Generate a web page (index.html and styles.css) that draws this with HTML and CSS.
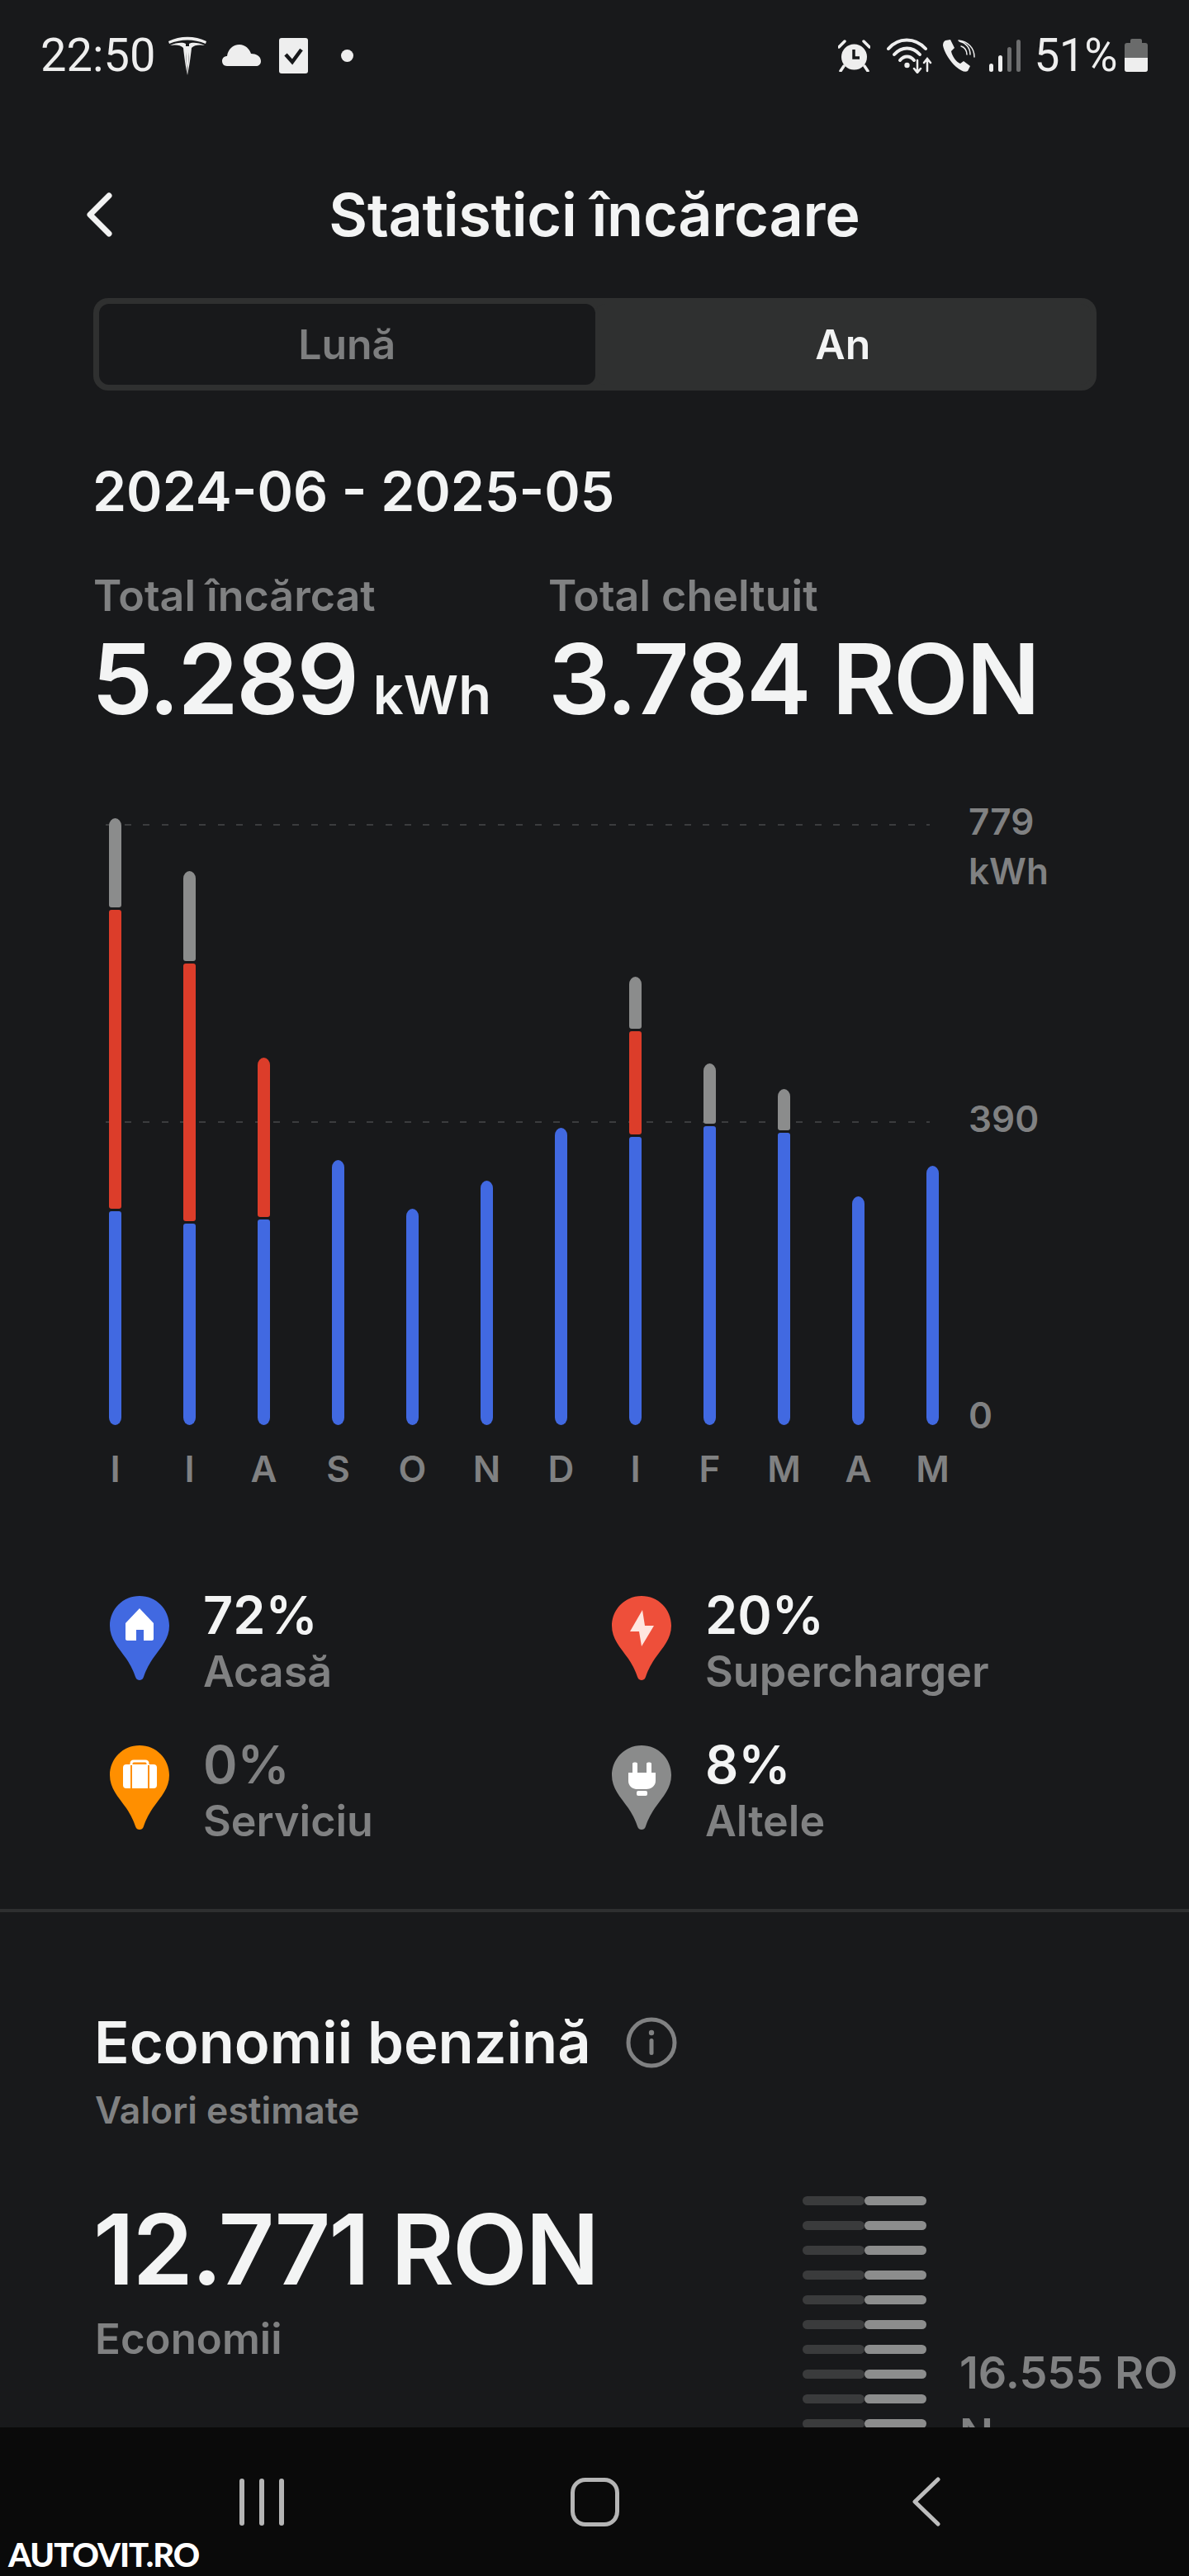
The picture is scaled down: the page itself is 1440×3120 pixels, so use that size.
FILE: index.html
```html
<!DOCTYPE html>
<html lang="ro">
<head>
    <meta charset="UTF-8">
    <title>Statistici încărcare</title>
    <link rel="stylesheet" href="styles.css">
</head>
<body>
<div class="screen">
    <div class="statusbar">
        <div class="status-group">
            <span class="clock">22:50</span>
            <svg class="ic-tesla" viewBox="0 0 46 47"><path d="M0 6C14 -1 32 -1 46 6L45 9C31 3 15 3 1 9Z"/><path d="M2 11C10 7 18 7 21 9V13C21 22 22 36 23 47C24 36 25 22 25 13V9C28 7 36 7 44 11C39 10 31 10 28 14C27 24 25 38 23 47C21 38 19 24 18 14C15 10 7 10 2 11Z"/><path d="M20.5 12H25.5L23 47Z"/></svg>
            <svg class="ic-cloud" viewBox="0 0 47 26"><path d="M6 26C2 26 0 23 0 20C0 16 3 14 6 14C7 6 13 0 21 0C28 0 33 5 35 11C41 11 47 14 47 20C47 24 44 26 41 26Z"/></svg>
            <svg class="ic-check" viewBox="0 0 35 43"><rect width="35" height="43" rx="3"/><path d="M8 20L16 29L27 14" fill="none" stroke="#17181a" stroke-width="4.5"/></svg>
            <span class="status-dot"></span>
        </div>
        <div class="status-group">
            <svg class="ic-alarm" viewBox="0 0 39 39"><circle cx="19.5" cy="21" r="15.5"/><path d="M1 9L8 2M38 9L31 2" stroke="#eee" stroke-width="3.5" stroke-linecap="round"/><path d="M7 32L3 38M32 32L36 38" stroke="#eee" stroke-width="3.5" stroke-linecap="round"/><path d="M19 12V22H26" fill="none" stroke="#17181a" stroke-width="3.5"/></svg>
            <svg class="ic-wifi" viewBox="0 0 55 44"><g fill="none" stroke="#eee" stroke-linecap="round"><path d="M2 14C14 0 34 0 47 14" stroke-width="4"/><path d="M9 21C18 11 31 11 40 21" stroke-width="4"/><path d="M16 28C21 22 28 22 33 28" stroke-width="4"/><path d="M37 28V42M33 38L37 43L41 38M49 28V41M45 31L49 26L53 31" stroke-width="2.5"/></g><circle cx="24.5" cy="34" r="3.2"/></svg>
            <svg class="ic-phone" viewBox="0 0 39 39"><path d="M3 1L9 0L14 10L10 14C11 20 16 27 21 29L25 26L33 32L30 38C27 40 22 38 16 33C8 26 1 14 0 7C0 4 1 2 3 1Z"/><path d="M20 2C28 4 33 10 33 18M22 8C26 9 29 13 29 18M19 1C30 2 38 10 38 21" fill="none" stroke="#eee" stroke-width="1.5" stroke-linecap="round"/></svg>
            <div class="signal"><i class="sig1"></i><i class="sig2"></i><i class="sig3"></i><i class="sig4"></i></div>
            <span class="batt-pct">51%</span>
            <div class="battery"><div class="batt-cap"></div><div class="batt-body"><div class="batt-fill"></div></div></div>
        </div>
    </div>

    <main class="content">
        <div class="topbar">
            <svg class="back" viewBox="0 0 32 54"><path d="M27 4L4 27L27 50" fill="none" stroke="#f2f2f2" stroke-width="7" stroke-linecap="round" stroke-linejoin="round"/></svg>
            <h1>Statistici încărcare</h1>
        </div>

        <div class="segment">
            <div class="seg-btn">Lună</div>
            <div class="seg-btn active">An</div>
        </div>

        <div class="date-range">2024-06 - 2025-05</div>

        <div class="totals">
            <div class="total total-kwh">
                <div class="total-label">Total încărcat</div>
                <div class="total-value">5.289 <small>kWh</small></div>
            </div>
            <div class="total">
                <div class="total-label">Total cheltuit</div>
                <div class="total-value">3.784 RON</div>
            </div>
        </div>

        <div class="chart">
            <div class="plot-wrap">
                <div class="plot">
                    <div class="gridline grid-top"></div>
                    <div class="gridline grid-mid"></div>
                    <div class="bar"><div class="gray" style="height:108px"></div><div class="red" style="height:362px"></div><div class="blue" style="height:259.5px"></div></div>
                    <div class="bar"><div class="gray" style="height:109px"></div><div class="red" style="height:312px"></div><div class="blue" style="height:244.5px"></div></div>
                    <div class="bar"><div class="red" style="height:193px"></div><div class="blue" style="height:249.5px"></div></div>
                    <div class="bar"><div class="blue" style="height:321.5px"></div></div>
                    <div class="bar"><div class="blue" style="height:262.5px"></div></div>
                    <div class="bar"><div class="blue" style="height:296.5px"></div></div>
                    <div class="bar"><div class="blue" style="height:360px"></div></div>
                    <div class="bar"><div class="gray" style="height:63px"></div><div class="red" style="height:125px"></div><div class="blue" style="height:349px"></div></div>
                    <div class="bar"><div class="gray" style="height:73px"></div><div class="blue" style="height:362.5px"></div></div>
                    <div class="bar"><div class="gray" style="height:50px"></div><div class="blue" style="height:354.5px"></div></div>
                    <div class="bar"><div class="blue" style="height:277.5px"></div></div>
                    <div class="bar"><div class="blue" style="height:314.5px"></div></div>
                </div>
                <div class="months">
                    <span>I</span><span>I</span><span>A</span><span>S</span><span>O</span><span>N</span><span>D</span><span>I</span><span>F</span><span>M</span><span>A</span><span>M</span>
                </div>
            </div>
            <div class="axis">
                <div class="axis-top">779<br>kWh</div>
                <div class="axis-mid">390</div>
                <div class="axis-low">0</div>
            </div>
        </div>

        <div class="legend">
            <div class="legend-item">
                <svg class="pin" viewBox="0 0 72 102"><path fill="#4169e1" d="M36 0C56 0 72 16 72 36C72 52 62 62 52 76C46 85 43 92 41 98C40 101 38 102 36 102C34 102 32 101 31 98C29 92 26 85 20 76C10 62 0 52 0 36C0 16 16 0 36 0Z"/><path fill="#fff" d="M36 15L53 33V52C53 53 52 54 51 54H41V41H32V54H21C20 54 19 53 19 52V33Z"/></svg>
                <div class="legend-text"><div class="pct">72%</div><div class="legend-name">Acasă</div></div>
            </div>
            <div class="legend-item">
                <svg class="pin" viewBox="0 0 72 102"><path fill="#ee4f3a" d="M36 0C56 0 72 16 72 36C72 52 62 62 52 76C46 85 43 92 41 98C40 101 38 102 36 102C34 102 32 101 31 98C29 92 26 85 20 76C10 62 0 52 0 36C0 16 16 0 36 0Z"/><path fill="#ffe6df" d="M37 17L22 43H33L36 61L51 36H40Z"/></svg>
                <div class="legend-text"><div class="pct">20%</div><div class="legend-name">Supercharger</div></div>
            </div>
            <div class="legend-item">
                <svg class="pin" viewBox="0 0 72 102"><path fill="#ff8f00" d="M36 0C56 0 72 16 72 36C72 52 62 62 52 76C46 85 43 92 41 98C40 101 38 102 36 102C34 102 32 101 31 98C29 92 26 85 20 76C10 62 0 52 0 36C0 16 16 0 36 0Z"/><path fill="none" stroke="#fff" stroke-width="3" d="M26 25V22C26 20 27 19 29 19H43C45 19 46 20 46 22V25"/><rect fill="#fff" x="16" y="23" width="41" height="29" rx="4"/><path stroke="#ff8f00" stroke-width="2" d="M26 24V52M47 24V52"/></svg>
                <div class="legend-text"><div class="pct dim">0%</div><div class="legend-name">Serviciu</div></div>
            </div>
            <div class="legend-item">
                <svg class="pin" viewBox="0 0 72 102"><path fill="#8a8b8b" d="M36 0C56 0 72 16 72 36C72 52 62 62 52 76C46 85 43 92 41 98C40 101 38 102 36 102C34 102 32 101 31 98C29 92 26 85 20 76C10 62 0 52 0 36C0 16 16 0 36 0Z"/><path fill="#fff" d="M25 22C25 20 31 20 31 22V33H42V22C42 20 48 20 48 22V33H53V43C53 50 46 53 42 53H31C26 53 20 50 20 43V33H25Z"/><rect fill="#fff" x="30" y="55" width="13" height="6" rx="2"/></svg>
                <div class="legend-text"><div class="pct">8%</div><div class="legend-name">Altele</div></div>
            </div>
        </div>

        <div class="divider"></div>

        <section class="savings">
            <div class="savings-head">
                <h2>Economii benzină</h2>
                <svg class="info" viewBox="0 0 62 62"><circle cx="31" cy="31" r="28" fill="none" stroke="#808182" stroke-width="5"/><circle cx="31" cy="19" r="3.2" fill="#808182"/><rect x="28.5" y="26" width="5" height="20" rx="2.5" fill="#808182"/></svg>
            </div>
            <div class="savings-sub">Valori estimate</div>
            <div class="savings-row">
                <div class="savings-main">
                    <div class="savings-value">12.771 RON</div>
                    <div class="savings-label">Economii</div>
                </div>
                <div class="ticks">
                    <div class="tick"><i></i><b></b></div>
                    <div class="tick"><i></i><b></b></div>
                    <div class="tick"><i></i><b></b></div>
                    <div class="tick"><i></i><b></b></div>
                    <div class="tick"><i></i><b></b></div>
                    <div class="tick"><i></i><b></b></div>
                    <div class="tick"><i></i><b></b></div>
                    <div class="tick"><i></i><b></b></div>
                    <div class="tick"><i></i><b></b></div>
                    <div class="tick"><i></i><b></b></div>
                </div>
                <div class="savings-side">16.555 RON</div>
            </div>
        </section>
    </main>

    <nav class="navbar">
        <div class="nav-recent"><i></i><i></i><i></i></div>
        <div class="nav-home"></div>
        <svg class="nav-back" viewBox="0 0 34 60"><path d="M31 3L3 30L31 57" fill="none" stroke="#bdbdbd" stroke-width="5" stroke-linecap="round" stroke-linejoin="round"/></svg>
        <div class="watermark">AUTOVIT.RO</div>
    </nav>
</div>
</body>
</html>
```

FILE: styles.css
```css
body {
    margin: 0;
    background-color: #18191b;
    color: #f3f4f4;
    font-family: 'Inter', 'Noto Sans', sans-serif;
}
h1, h2 {
    margin: 0;
    font-weight: 500;
}
.screen {
    width: 1440px;
    height: 3120px;
    display: flex;
    flex-direction: column;
    overflow: hidden;
    position: relative;
}

/* status bar */
.statusbar {
    flex: 0 0 134px;
    display: flex;
    justify-content: space-between;
    align-items: center;
    padding: 0 50px 0 49px;
    color: #eee;
}
.status-group {
    display: flex;
    align-items: center;
}
.status-group svg {
    fill: #eee;
    display: block;
}
.clock {
    font-family: 'Roboto', sans-serif;
    font-weight: 400;
    font-size: 56px;
    line-height: 60px;
}
.ic-tesla { width: 46px; height: 47px; margin-left: 16px; }
.ic-cloud { width: 47px; height: 26px; margin-left: 19px; }
.ic-check { width: 35px; height: 43px; margin-left: 22px; }
.status-dot {
    width: 15px;
    height: 15px;
    border-radius: 50%;
    background-color: #eee;
    margin-left: 40px;
}
.ic-alarm { width: 39px; height: 39px; }
.ic-wifi { width: 55px; height: 44px; margin-left: 20px; }
.ic-phone { width: 39px; height: 39px; margin-left: 13px; }
.signal {
    display: flex;
    align-items: flex-end;
    gap: 6px;
    height: 39px;
    margin-left: 17px;
}
.signal i {
    width: 5px;
    border-radius: 2.5px;
    background-color: #eee;
}
.sig1 { height: 10px; }
.sig2 { height: 20px; }
.sig3 { height: 30px; background-color: #6d6e6f !important; }
.sig4 { height: 39px; background-color: #6d6e6f !important; }
.batt-pct {
    font-family: 'Roboto', sans-serif;
    font-weight: 400;
    font-size: 55px;
    line-height: 60px;
    margin-left: 16px;
    letter-spacing: -0.5px;
}
.battery {
    width: 28px;
    margin-left: 9px;
}
.batt-cap {
    width: 14px;
    height: 5px;
    margin: 0 auto;
    background-color: #6a6b6b;
    border-radius: 2px 2px 0 0;
}
.batt-body {
    height: 35px;
    background-color: #6a6b6b;
    border-radius: 3px;
    display: flex;
    flex-direction: column;
    justify-content: flex-end;
    overflow: hidden;
}
.batt-fill {
    height: 17px;
    background-color: #eee;
}

.content {
    flex: 1;
    min-height: 0;
    overflow: hidden;
}

/* header */
.topbar {
    position: relative;
    height: 100px;
    margin-top: 76px;
    text-align: center;
}
.back {
    position: absolute;
    left: 105px;
    top: 23px;
    width: 32px;
    height: 54px;
}
.topbar h1 {
    font-size: 72px;
    line-height: 100px;
    font-weight: 600;
    letter-spacing: -0.25px;
}

/* month / year switch */
.segment {
    display: flex;
    width: 1201px;
    height: 98px;
    margin: 51px 0 0 113px;
    padding: 7px;
    background-color: #2f3030;
    border-radius: 18px;
}
.seg-btn {
    flex: 1;
    text-align: center;
    font-size: 50px;
    line-height: 98px;
    font-weight: 600;
    color: #7d7e7f;
    background-color: #18191b;
    border-radius: 12px;
}
.seg-btn.active {
    color: #f3f4f4;
    background-color: #2f3030;
}

.date-range {
    margin: 82px 0 0 112px;
    font-size: 66px;
    line-height: 80px;
    font-weight: 600;
}

/* totals */
.totals {
    display: flex;
    margin: 57px 0 0 113px;
}
.total-kwh {
    width: 551px;
}
.total-label {
    font-size: 52px;
    line-height: 60px;
    font-weight: 600;
    color: #808182;
}
.total-value {
    margin-top: 10px;
    font-size: 118px;
    line-height: 120px;
    font-weight: 600;
    letter-spacing: -2.4px;
    white-space: nowrap;
}
.total-kwh .total-value {
    margin-left: -2px;
}
.total-value small {
    font-size: 65px;
    line-height: 1;
    letter-spacing: 0;
    margin-left: -8px;
}

/* chart */
.chart {
    display: flex;
    margin-top: 82.5px;
}
.plot-wrap {
    padding-left: 94.5px;
}
.plot {
    position: relative;
    display: flex;
    align-items: flex-end;
    width: 1080px;
    height: 761.5px;
}
.gridline {
    position: absolute;
    left: 33.5px;
    width: 998px;
    height: 2px;
    background: repeating-linear-gradient(90deg, #3b3c3e 0 8px, transparent 8px 22.6px);
}
.grid-top { top: 33px; }
.grid-mid { top: 393px; }
.bar {
    position: relative;
    flex: 0 0 90px;
    display: flex;
    flex-direction: column;
    align-items: center;
    gap: 3px;
}
.bar div {
    width: 15px;
    border-radius: 3px;
}
.bar div:first-child {
    border-top-left-radius: 7.5px 9px;
    border-top-right-radius: 7.5px 9px;
}
.bar div:last-child {
    border-bottom-left-radius: 7.5px 9px;
    border-bottom-right-radius: 7.5px 9px;
}
.gray { background-color: #8b8c8c; }
.red { background-color: #dc3d2a; }
.blue { background-color: #4169e1; }
.months {
    display: flex;
    margin-top: 29.5px;
    font-size: 44px;
    line-height: 46px;
    font-weight: 600;
    color: #808182;
}
.months span {
    flex: 0 0 90px;
    text-align: center;
}
.axis {
    margin-left: -1.5px;
    font-size: 44px;
    line-height: 60px;
    font-weight: 600;
    color: #808182;
}
.axis-mid { margin-top: 240px; }
.axis-low { margin-top: 299px; }

/* legend */
.legend {
    display: grid;
    grid-template-columns: 608px 1fr;
    row-gap: 50px;
    margin: 122px 0 0 133px;
}
.legend-item {
    display: flex;
    gap: 41px;
}
.pin {
    display: block;
    width: 72px;
    height: 102px;
    margin-top: 9px;
}
.pct {
    font-size: 63px;
    line-height: 64px;
    font-weight: 600;
}
.pct.dim { color: #808182; }
.legend-name {
    margin-top: 7px;
    font-size: 52px;
    line-height: 60px;
    font-weight: 600;
    color: #808182;
}

.divider {
    height: 4px;
    margin-top: 76px;
    background-color: #2e2f30;
}

/* petrol savings */
.savings {
    padding-left: 115px;
    margin-top: 118px;
}
.savings-head {
    display: flex;
    align-items: center;
    gap: 42px;
}
.savings-head h2 {
    font-size: 70.5px;
    line-height: 80px;
    font-weight: 600;
    margin-left: -1px;
}
.info {
    width: 62px;
    height: 62px;
}
.savings-sub {
    margin-top: 17.5px;
    font-size: 44.5px;
    line-height: 50px;
    font-weight: 600;
    color: #808182;
}
.savings-row {
    display: flex;
    margin-top: 79px;
}
.savings-main {
    flex: 0 0 857px;
    padding-top: 3.5px;
}
.savings-value {
    font-size: 118px;
    line-height: 120px;
    font-weight: 600;
    letter-spacing: -2.3px;
    margin-left: -2px;
}
.savings-label {
    margin-top: 19px;
    font-size: 51px;
    line-height: 60px;
    font-weight: 600;
    color: #808182;
}
.ticks {
    display: flex;
    flex-direction: column;
    flex: 0 0 150px;
    gap: 19px;
}
.tick {
    display: flex;
    height: 11px;
}
.tick i, .tick b {
    flex: 1;
    border-radius: 6px;
}
.tick i { background-color: #3a3b3c; }
.tick b { background-color: #8c8d8d; }
.savings-side {
    flex: 0 0 278px;
    margin-left: 40px;
    padding-top: 175.5px;
    font-size: 54px;
    line-height: 75px;
    font-weight: 600;
    color: #808182;
    word-break: break-all;
}

/* android nav */
.navbar {
    position: relative;
    flex: 0 0 180px;
    display: flex;
    align-items: center;
    background-color: #0a0a0a;
    padding-left: 290px;
}
.nav-recent {
    display: flex;
    gap: 18px;
}
.nav-recent i {
    width: 6px;
    height: 57px;
    border-radius: 3px;
    background-color: #b5b5b5;
}
.nav-home {
    width: 49px;
    height: 49px;
    margin-left: 347px;
    border: 5px solid #b5b5b5;
    border-radius: 18px;
}
.nav-back {
    width: 34px;
    height: 60px;
    margin-left: 355px;
}
.watermark {
    position: absolute;
    left: 10px;
    bottom: 6px;
    font-family: 'Lato', sans-serif;
    font-weight: 900;
    font-size: 40px;
    line-height: 40px;
    letter-spacing: -1px;
    color: #fff;
}
```
